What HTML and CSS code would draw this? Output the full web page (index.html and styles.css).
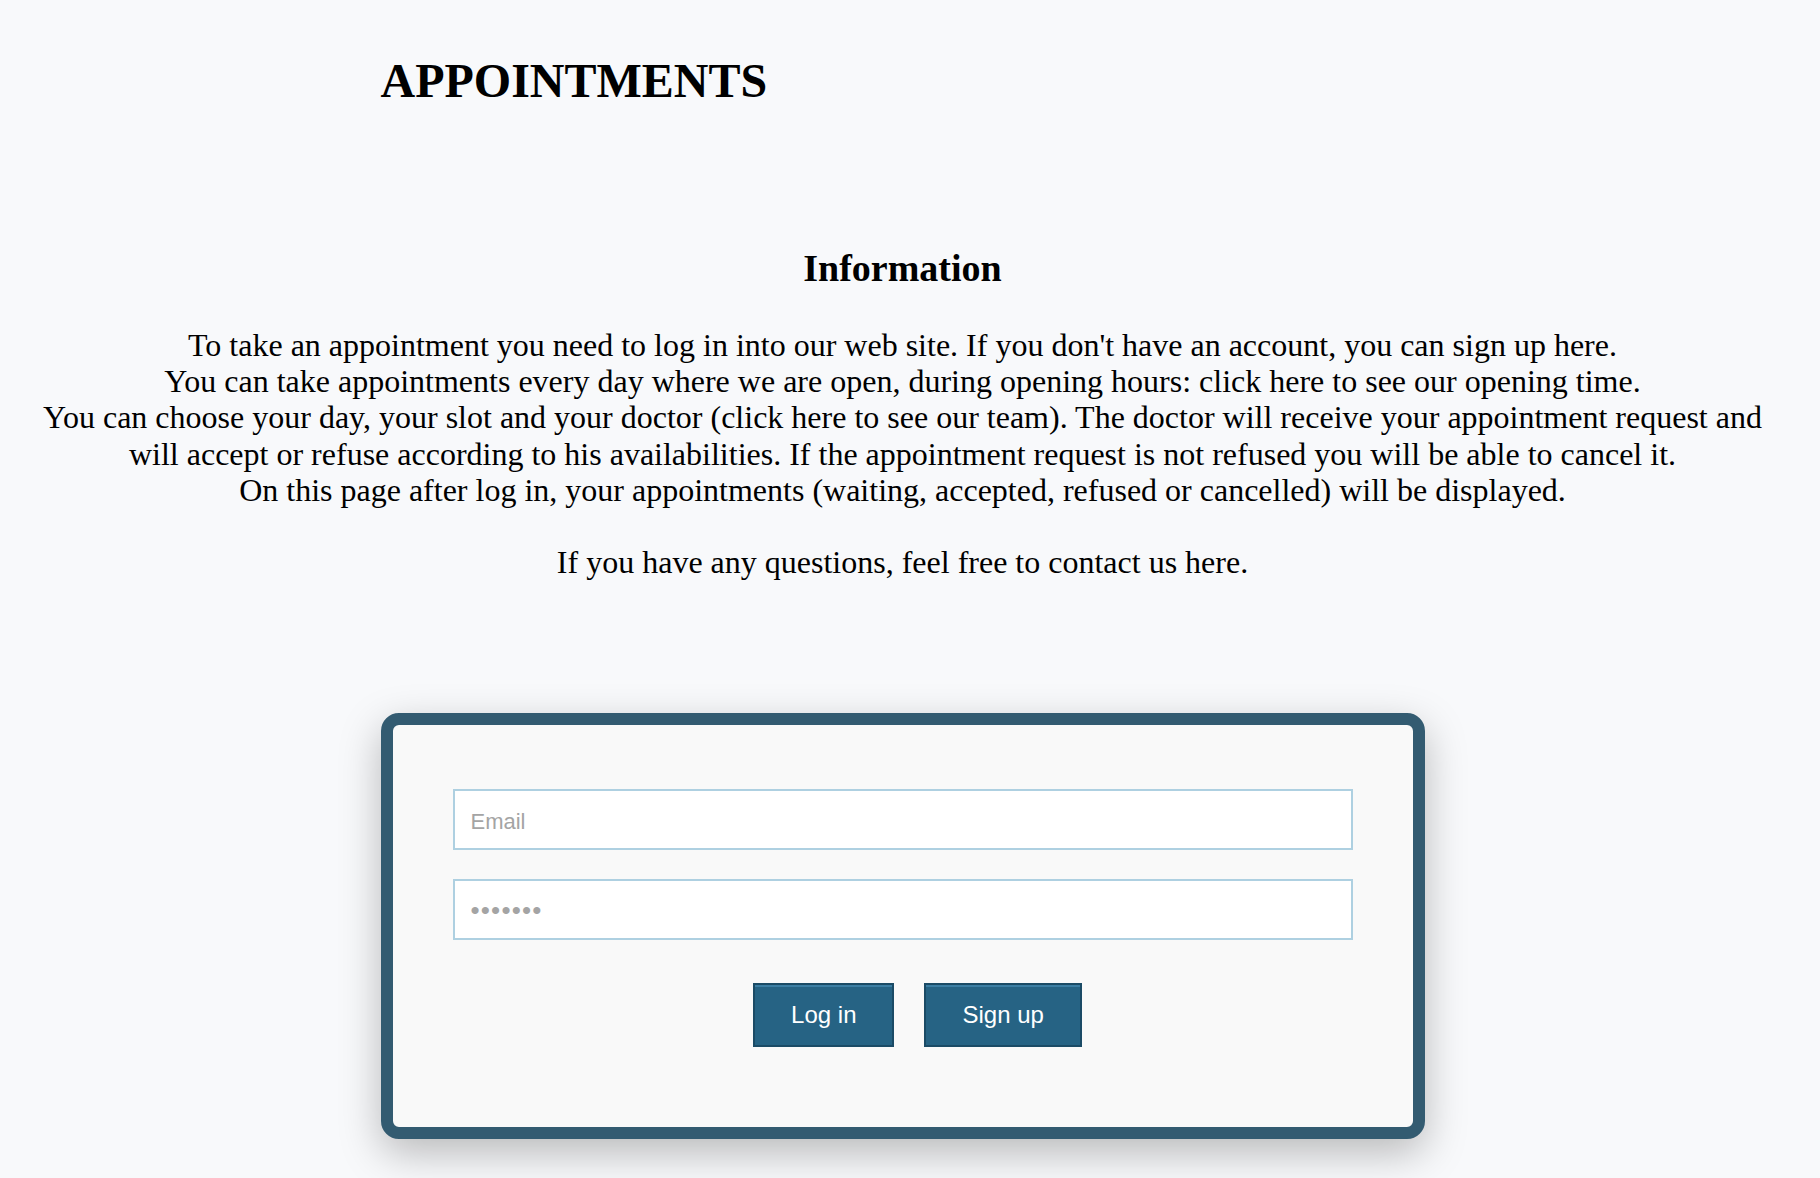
FILE: index.html
```html
<!DOCTYPE html>
<html lang="en">
<head>
<meta charset="utf-8">
<title>Appointments</title>
<link rel="stylesheet" href="styles.css">
</head>
<body>
<div class="page">
  <header class="header">
    <h1 class="title">APPOINTMENTS</h1>
  </header>
  <section class="info">
    <h2 class="info-title">Information</h2>
    <p class="info-text">To take an appointment you need to log in into our web site. If you don't have an account, you can sign up here.<br>You can take appointments every day where we are open, during opening hours: click here to see our opening time.<br>You can choose your day, your slot and your doctor (click here to see our team). The doctor will receive your appointment request and will accept or refuse according to his availabilities. If the appointment request is not refused you will be able to cancel it.<br>On this page after log in, your appointments (waiting, accepted, refused or cancelled) will be displayed.<br><br>If you have any questions, feel free to contact us here.</p>
  </section>
  <form class="card">
    <input class="field field-email" type="email" placeholder="Email">
    <input class="field field-password" type="password" placeholder="•••••••">
    <div class="actions">
      <button class="btn" type="button">Log in</button>
      <button class="btn" type="button">Sign up</button>
    </div>
  </form>
</div>
</body>
</html>
```

FILE: styles.css
```css
html, body {
  margin: 0;
  background: #f8f9fb;
}

body {
  font-family: "Liberation Serif", "Times New Roman", serif;
  color: #000;
}

.page {
  padding: 0 23px 0 8px;
}

.header {
  width: 1044px;
  margin: 0 auto;
  padding-top: 57px;
}

.title {
  margin: 0;
  font-size: 48px;
  line-height: 48px;
  font-weight: bold;
}

.info {
  text-align: center;
}

.info-title {
  margin: 144px 0 0;
  font-size: 38px;
  line-height: 38px;
  font-weight: bold;
}

.info-text {
  margin: 40px 0 0;
  padding: 0 20px;
  font-size: 32px;
  line-height: 36.2px;
}

.card {
  box-sizing: border-box;
  width: 1044px;
  margin: 133px auto 40px;
  padding: 64px 60px 80px;
  border: 12px solid #335b71;
  border-radius: 18px;
  background: #f9f9f9;
  box-shadow: 0 14px 42px rgba(0, 0, 0, 0.26);
}

.field {
  display: block;
  box-sizing: border-box;
  width: 100%;
  height: 61px;
  margin: 0;
  padding: 4px 16px 0;
  border: 2px solid #aed0e1;
  border-radius: 0;
  background: #fff;
  font-family: "Liberation Sans", Arial, sans-serif;
  font-size: 22px;
  color: #333;
  outline: none;
}

.field::placeholder {
  color: #a4a4a4;
}

.field-password::placeholder {
  font-size: 26px;
  letter-spacing: 1.2px;
}

.field-email {
  margin-bottom: 29px;
}

.actions {
  margin-top: 43px;
  text-align: center;
  font-size: 0;
}

.btn {
  display: inline-block;
  box-sizing: border-box;
  height: 64px;
  margin: 0 0 0 30px;
  padding: 0 36px;
  border: 2px solid #1b4b66;
  border-radius: 0;
  background: #266384;
  box-shadow: inset 0 2px 0 #3c7ea3;
  color: #fff;
  font-family: "Liberation Sans", Arial, sans-serif;
  font-size: 24px;
  cursor: pointer;
}
```
